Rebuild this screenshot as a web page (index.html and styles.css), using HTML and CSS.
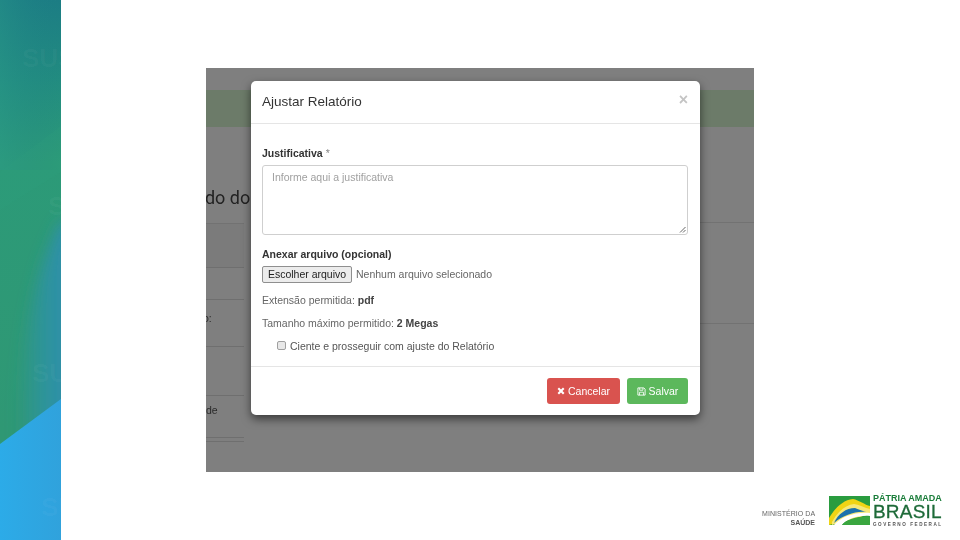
FILE: index.html
```html
<!DOCTYPE html>
<html lang="pt-BR">
<head>
<meta charset="utf-8">
<title>Ajustar Relatório</title>
<link rel="stylesheet" href="styles.css">
</head>
<body>
<div class="slide">
  <aside class="band">
    <svg class="band-art" viewBox="0 0 61 540" width="61" height="540" aria-hidden="true">
      <defs>
        <linearGradient id="bandBase" gradientUnits="userSpaceOnUse" x1="0" y1="0" x2="0" y2="540">
          <stop offset="0" stop-color="#1c7d84"/>
          <stop offset="0.15" stop-color="#228c80"/>
          <stop offset="0.3" stop-color="#2c9a78"/>
          <stop offset="0.8" stop-color="#2f9874"/>
        </linearGradient>
        <linearGradient id="bandSwoop" gradientUnits="userSpaceOnUse" x1="16" y1="0" x2="61" y2="0">
          <stop offset="0" stop-color="#2d93a2" stop-opacity="0"/>
          <stop offset="0.6" stop-color="#2d93a2" stop-opacity="0.8"/>
          <stop offset="1" stop-color="#2e90a8"/>
        </linearGradient>
        <linearGradient id="bandTopLeft" gradientUnits="userSpaceOnUse" x1="0" y1="0" x2="61" y2="0">
          <stop offset="0" stop-color="#2a9a8a" stop-opacity="0.4"/>
          <stop offset="1" stop-color="#1c7d84" stop-opacity="0"/>
        </linearGradient>
        <linearGradient id="bandBlue" gradientUnits="userSpaceOnUse" x1="0" y1="0" x2="61" y2="0">
          <stop offset="0" stop-color="#2cabe8"/>
          <stop offset="1" stop-color="#30a2dc"/>
        </linearGradient>
        <filter id="soft" x="-50%" y="-20%" width="200%" height="140%">
          <feGaussianBlur stdDeviation="7"/>
        </filter>
      </defs>
      <rect width="61" height="540" fill="url(#bandBase)"/>
      <rect width="61" height="170" fill="url(#bandTopLeft)"/>
      <path d="M0 172 L61 126 L61 172 L0 210 Z" fill="#35a27c" opacity="0.14"/>
      <path d="M14 460 C16 350 34 270 61 222 L90 222 L90 440 Z" fill="url(#bandSwoop)" filter="url(#soft)"/>
      <path d="M0 444 L61 399 L61 540 L0 540 Z" fill="url(#bandBlue)"/>
      <text class="band-mark" x="22" y="67">SUS</text>
      <text class="band-mark" x="48" y="215">SUS</text>
      <text class="band-mark" x="32" y="382">SUS</text>
      <text class="band-mark" x="41" y="516">SUS</text>
    </svg>
  </aside>

  <main class="stage">
    <div class="shot">
      <div class="shot-bar"></div>
      <div class="shot-page">
        <h2 class="shot-heading">Resultado do</h2>
        <div class="shot-row shot-row-first"></div>
        <div class="shot-row shot-row-2"></div>
        <div class="shot-row shot-row-3"><span>o:</span></div>
        <div class="shot-row shot-row-4"></div>
        <div class="shot-row shot-row-5"><span>de</span></div>
        <div class="shot-row shot-row-6"></div>
      </div>

      <div class="rule-right rule-right-a"></div>
      <div class="rule-right rule-right-b"></div>

      <section class="modal">
        <header class="modal-header">
          <h4 class="modal-title">Ajustar Relatório</h4>
          <span class="modal-close">×</span>
        </header>
        <div class="modal-body">
          <div class="label-line"><strong>Justificativa</strong> <span class="req">*</span></div>
          <div class="textarea">
            <span>Informe aqui a justificativa</span>
            <svg class="grip" viewBox="0 0 7 7" width="7" height="7" aria-hidden="true">
              <path d="M6.5 1 L1 6.5 M6.5 4 L4 6.5" stroke="#666" stroke-width="1" fill="none"/>
            </svg>
          </div>
          <div class="label-line attach"><strong>Anexar arquivo (opcional)</strong></div>
          <div class="file-line">
            <span class="file-btn">Escolher arquivo</span>
            <span>Nenhum arquivo selecionado</span>
          </div>
          <p class="note note-first">Extensão permitida: <b>pdf</b></p>
          <p class="note">Tamanho máximo permitido: <b>2 Megas</b></p>
          <div class="check-line">
            <span class="check"></span>
            <span>Ciente e prosseguir com ajuste do Relatório</span>
          </div>
        </div>
        <footer class="modal-footer">
          <span class="btn btn-red">
            <svg class="ico" viewBox="0 0 10 10" width="8" height="8" aria-hidden="true">
              <path d="M1.6 1.6 L8.4 8.4 M8.4 1.6 L1.6 8.4" stroke="#fff" stroke-width="2.6" fill="none"/>
            </svg>Cancelar</span>
          <span class="btn btn-green">
            <svg class="ico" viewBox="0 0 10 10" width="9" height="9" aria-hidden="true">
              <path d="M1 1 H7.6 L9 2.4 V9 H1 Z" stroke="#fff" stroke-width="1" fill="none"/>
              <path d="M3 1 V3.6 H6.6 V1 M2.8 9 V5.8 H7.2 V9" stroke="#fff" stroke-width="0.9" fill="none"/>
            </svg>Salvar</span>
        </footer>
      </section>
    </div>

    <div class="brand-row">
      <div class="ministry">
        <span class="ministry-top">MINISTÉRIO DA</span>
        <span class="ministry-sub">SAÚDE</span>
      </div>
      <svg class="flag" viewBox="0 0 41 29" width="41" height="29" aria-hidden="true">
        <rect width="41" height="29" fill="#2a9c3f"/>
        <path d="M0 22 C6 12 14 4 24 3 C30 4 36 9 41 10 L41 18 L0 29 Z" fill="#f0d414"/>
        <path d="M3 26 C9 15 17 9 25 8 C31 9 36 12 41 13 L41 18 L3 29 Z" fill="#f6e878"/>
        <path d="M5 27 C9 18 17 12 26 12 C29 13 33 15 37 16 C26 15 15 19 5 27 Z" fill="#1c72ac"/>
        <path d="M5 29 C12 21 25 16 41 17 L41 20 C28 19 18 23 13 29 Z" fill="#ffffff"/>
        <path d="M13 29 C18 23 28 20 41 20.5 L41 29 Z" fill="#3aa63f"/>
      </svg>
      <div class="brasil">
        <span class="brasil-top">PÁTRIA AMADA</span>
        <span class="brasil-main">BRASIL</span>
        <span class="brasil-sub">GOVERNO FEDERAL</span>
      </div>
    </div>
  </main>
</div>
</body>
</html>
```

FILE: styles.css
```css
* { box-sizing: border-box; }
html, body { margin: 0; padding: 0; }
body {
  width: 960px;
  height: 540px;
  overflow: hidden;
  background: #fff;
  font-family: "Liberation Sans", Arial, sans-serif;
}
.slide { display: flex; width: 960px; height: 540px; }
.band { width: 61px; height: 540px; flex: none; overflow: hidden; }
.band-art { display: block; }
.band-mark {
  font: bold 26px "Liberation Sans", sans-serif;
  fill: #ffffff;
  fill-opacity: 0.035;
}
.stage { flex: 1; position: relative; padding-left: 145px; padding-top: 68px; }

.shot {
  position: relative;
  width: 548px;
  height: 404px;
  overflow: hidden;
  background: #7f7f7f;
  color: #333;
  font-size: 10.5px;
  line-height: 15px;
}
.shot-bar { position: absolute; left: 0; right: 0; top: 22px; height: 37px; background: #6c7b69; }
.shot-page { display: flex; flex-direction: column; width: 38px; height: 404px; filter: blur(0.3px); }
.shot-heading {
  margin: 119px 0 0 -61px;
  height: 36px;
  width: 110px;
  font: 400 18px/22px Roboto, "Liberation Sans", sans-serif;
  white-space: nowrap;
  color: #232323;
  flex: none;
}
.shot-row { flex: none; border-bottom: 1px solid #6f6f6f; color: #2a2a2a; white-space: nowrap; }
.shot-row span { display: block; font-size: 10.5px; }
.shot-row-first { height: 45px; border-top: 1px solid #727272; background: #7b7b7b; }
.shot-row-2 { height: 32px; }
.shot-row-3 { height: 47px; padding-top: 11px; }
.shot-row-3 span { margin-left: -3px; }
.shot-row-4 { height: 49px; }
.shot-row-5 { height: 42px; padding-top: 7px; }
.shot-row-6 { height: 4px; }
.rule-right { position: absolute; left: 494px; right: 0; height: 1px; background: #727272; }
.rule-right-a { top: 154px; }
.rule-right-b { top: 255px; }

.modal {
  position: absolute;
  left: 45px;
  top: 13px;
  width: 449px;
  height: 334px;
  background: #fff;
  border-radius: 5px;
  box-shadow: 0 4px 10px rgba(0, 0, 0, 0.55);
  display: flex;
  flex-direction: column;
  filter: blur(0.35px);
}
.modal-header {
  height: 43px;
  flex: none;
  padding: 0 11px;
  border-bottom: 1px solid #e5e5e5;
  display: flex;
  align-items: center;
  justify-content: space-between;
}
.modal-title { margin: -2px 0 0; font-size: 13.5px; font-weight: 400; color: #333; }
.modal-close { font-size: 16px; font-weight: 700; color: #c4c4c4; margin-top: -5px; margin-right: 1px; }
.modal-body { flex: 1; padding: 22px 11px 0; color: #555; }
.label-line { height: 15px; color: #333; }
.label-line strong { font-weight: 700; }
.req { color: #888; }
.textarea {
  position: relative;
  margin-top: 4px;
  height: 70px;
  width: 426px;
  border: 1px solid #cfcfcf;
  border-radius: 3px;
  padding: 4px 9px;
  color: #a0a0a0;
}
.grip { position: absolute; right: 1px; bottom: 1px; }
.attach { margin-top: 12px; }
.file-line { display: flex; align-items: center; gap: 4px; margin-top: 4px; height: 17px; color: #666; }
.file-btn {
  width: 90px;
  height: 17px;
  line-height: 15px;
  text-align: center;
  background: #ececec;
  border: 1px solid #8f8f8f;
  border-radius: 2px;
  color: #222;
}
.note { margin: 0; height: 15px; color: #666; }
.note b { font-weight: 700; color: #444; }
.note-first { margin-top: 10px; margin-bottom: 8px; }
.check-line { display: flex; align-items: center; gap: 4px; margin-top: 8px; margin-left: 15px; height: 15px; color: #555; }
.check { width: 9px; height: 9px; margin-top: -2px; background: #e8e8e8; border: 1px solid #a0a0a0; border-radius: 2px; }
.modal-footer {
  height: 49px;
  flex: none;
  padding: 11px 12px 0;
  border-top: 1px solid #e5e5e5;
  display: flex;
  justify-content: flex-end;
  gap: 7px;
}
.btn {
  height: 26px;
  border-radius: 3px;
  color: #fff;
  display: flex;
  align-items: center;
  justify-content: center;
  gap: 3px;
}
.btn-red { width: 73px; background: #d9534f; }
.btn-green { width: 61px; background: #5cb85c; }
.ico { display: block; }

.brand-row {
  position: absolute;
  left: 701px;
  top: 494px;
  display: flex;
  align-items: flex-start;
  filter: blur(0.35px);
}
.ministry { width: 53px; text-align: right; display: flex; flex-direction: column; margin-top: 15px; margin-right: 14px; }
.ministry-top { font-size: 7px; line-height: 9px; letter-spacing: 0.05px; color: #666; white-space: nowrap; }
.ministry-sub { font-size: 7px; line-height: 9px; font-weight: 700; color: #555; }
.flag { flex: none; margin-top: 2px; margin-right: 3px; }
.brasil { display: flex; flex-direction: column; width: 70px; }
.brasil-top { font-size: 9px; line-height: 9px; font-weight: 700; white-space: nowrap; color: #1a7d3a; }
.brasil-main {
  font: 400 19px/17px "Liberation Sans", sans-serif;
  letter-spacing: 0.2px;
  -webkit-text-stroke: 0.3px #1d6a38;
  color: #1d6a38;
}
.brasil-sub { margin-top: 2px; font-size: 4.6px; line-height: 5px; font-weight: 700; letter-spacing: 1.55px; color: #555; white-space: nowrap; }
```
